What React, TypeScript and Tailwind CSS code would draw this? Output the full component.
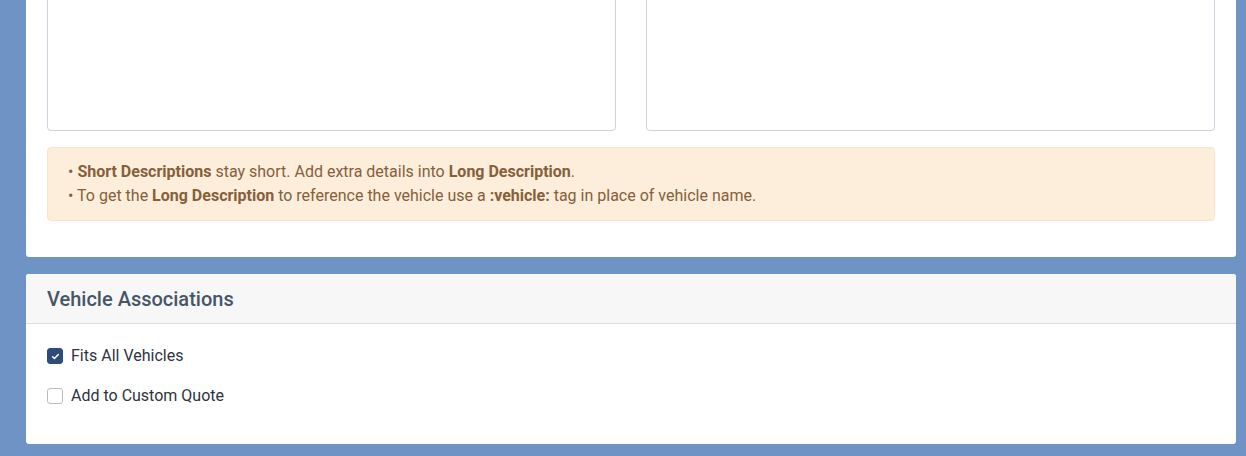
import React, { useState } from 'react';

const font = { fontFamily: 'Roboto, "Liberation Sans", sans-serif' };

const Check = ({ checked, label, onChange }: { checked: boolean; label: string; onChange: () => void }) => (
  <label className="flex items-center cursor-pointer select-none h-6">
    <span
      onClick={onChange}
      className={
        checked
          ? 'w-4 h-4 rounded-[3px] bg-[#2f4b7c] border border-[#2f4b7c] flex items-center justify-center mr-2'
          : 'w-4 h-4 rounded-[3px] bg-white border border-[#b5bcc6] flex items-center justify-center mr-2'
      }
    >
      {checked && (
        <svg viewBox="0 0 12 12" className="w-[9px] h-[9px]">
          <path d="M2.2 6.3l2.4 2.4 5.2-5.4" fill="none" stroke="white" strokeWidth="2" strokeLinecap="round" strokeLinejoin="round" />
        </svg>
      )}
    </span>
    <span className="text-base text-[#2d3440]">{label}</span>
  </label>
);

export default function App() {
  const [fits, setFits] = useState(true);
  const [quote, setQuote] = useState(false);

  return (
    <div className="w-[1246px] h-[456px] overflow-hidden bg-[#6f93c5]" style={font}>
      <div className="pl-[26px] pr-[10px] mt-[-60px] flex flex-col gap-[17px]">
        <div className="bg-white rounded-[3px] p-[21px] pb-[36px]">
          <div className="grid grid-cols-2 gap-[30px]">
            <textarea className="h-[170px] border border-[#cdd3db] rounded-[4px] resize-none outline-none" />
            <textarea className="h-[170px] border border-[#cdd3db] rounded-[4px] resize-none outline-none" />
          </div>
          <div className="mt-[16px] bg-[#fdeedb] border border-[#fbe4c7] rounded-[4px] px-[20px] py-[12px] text-base leading-6 text-[#85603a]">
            <div>
              • <b className="font-bold">Short Descriptions</b> stay short. Add extra details into <b className="font-bold">Long Description</b>.
            </div>
            <div>
              • To get the <b className="font-bold">Long Description</b> to reference the vehicle use a <b className="font-bold">:vehicle:</b> tag in place of vehicle name.
            </div>
          </div>
        </div>

        <div className="bg-white rounded-[3px] overflow-hidden">
          <div className="h-[50px] bg-[#f7f7f7] border-b border-[#dcdcdc] px-[21px] flex items-center">
            <h2 className="text-xl font-medium text-[#475569]">Vehicle Associations</h2>
          </div>
          <div className="px-[21px] pt-[20px] pb-[36px] flex flex-col gap-4">
            <Check checked={fits} label="Fits All Vehicles" onChange={() => setFits(!fits)} />
            <Check checked={quote} label="Add to Custom Quote" onChange={() => setQuote(!quote)} />
          </div>
        </div>
      </div>
    </div>
  );
}
